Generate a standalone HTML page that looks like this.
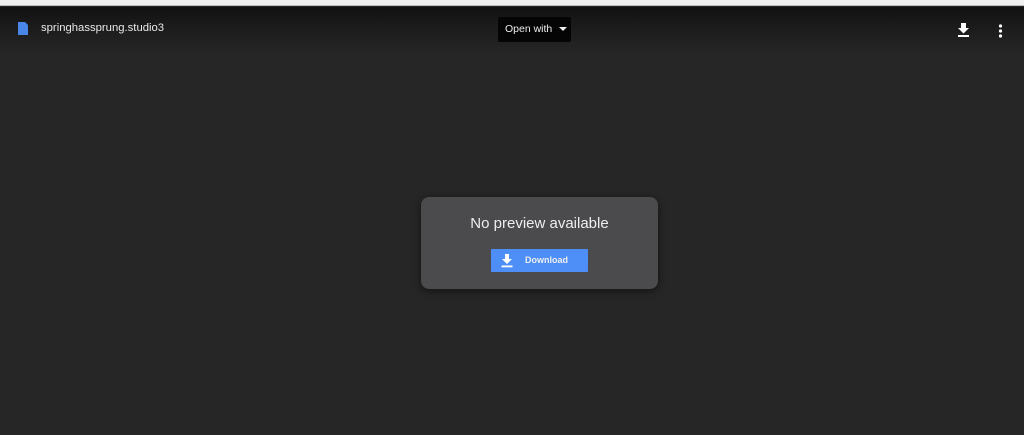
<!DOCTYPE html>
<html><head><style>
*{margin:0;padding:0;box-sizing:border-box}
body{width:1024px;height:435px;background:#262626;font-family:"Liberation Sans",sans-serif;position:relative;overflow:hidden}
.strip{position:absolute;left:0;top:0;width:1024px;height:6px;background:#f1f1f1;border-bottom:1px solid #bbb}
.hdr{position:absolute;left:0;top:7px;width:1024px;height:48px;background:linear-gradient(#121212,#1f1f1f 60%,#262626)}
.name{position:absolute;left:41px;top:22px;color:#e8e8e8;font-size:11.3px;white-space:nowrap}
.open{position:absolute;left:498px;top:17px;width:73px;height:25px;background:#050505;border-radius:2px;color:#eee;font-size:10.5px;line-height:25px;padding-left:7px;white-space:nowrap}
.card{position:absolute;left:421px;top:197px;width:237px;height:92px;background:#4b4a4c;border-radius:8px;box-shadow:0 2px 8px rgba(0,0,0,.5)}
.t{position:absolute;left:0;width:237px;top:18px;text-align:center;color:#eee;font-size:15px}
.btn{position:absolute;left:70px;top:52px;width:97px;height:23px;background:#4d8ff7;border-radius:1px;color:#eee;font-size:9px;font-weight:bold;line-height:23px;padding-left:34px}
</style></head><body>
<div class="strip"></div>
<div class="hdr"></div>
<svg style="position:absolute;left:18px;top:22px" width="10" height="13" viewBox="0 0 10 13"><path d="M0 0H7L10 3V13H0Z" fill="#4a86e8"/></svg>
<div class="name">springhassprung.studio3</div>
<div class="open">Open with <span style="display:inline-block;margin-left:4px;border-left:4px solid transparent;border-right:4px solid transparent;border-top:4px solid #eee;vertical-align:middle"></span></div>
<svg style="position:absolute;left:957px;top:23px" width="13" height="15" viewBox="0 0 13 15"><path d="M4 0H9V5H12L6.5 10.5L1 5H4Z" fill="#fff"/><rect x="1" y="12" width="11" height="2" fill="#fff"/></svg>
<svg style="position:absolute;left:998px;top:24px" width="5" height="14" viewBox="0 0 5 14"><circle cx="2.5" cy="2" r="1.6" fill="#fff"/><circle cx="2.5" cy="7" r="1.6" fill="#fff"/><circle cx="2.5" cy="12" r="1.6" fill="#fff"/></svg>
<div class="card"><div class="t">No preview available</div>
<div class="btn"><svg style="position:absolute;left:10px;top:5px" width="12" height="14" viewBox="0 0 12 14"><path d="M4 0H8V5H11L6 10L1 5H4Z" fill="#fff"/><rect x="0.5" y="11.5" width="11" height="1.8" fill="#fff"/></svg>Download</div></div>
</body></html>
